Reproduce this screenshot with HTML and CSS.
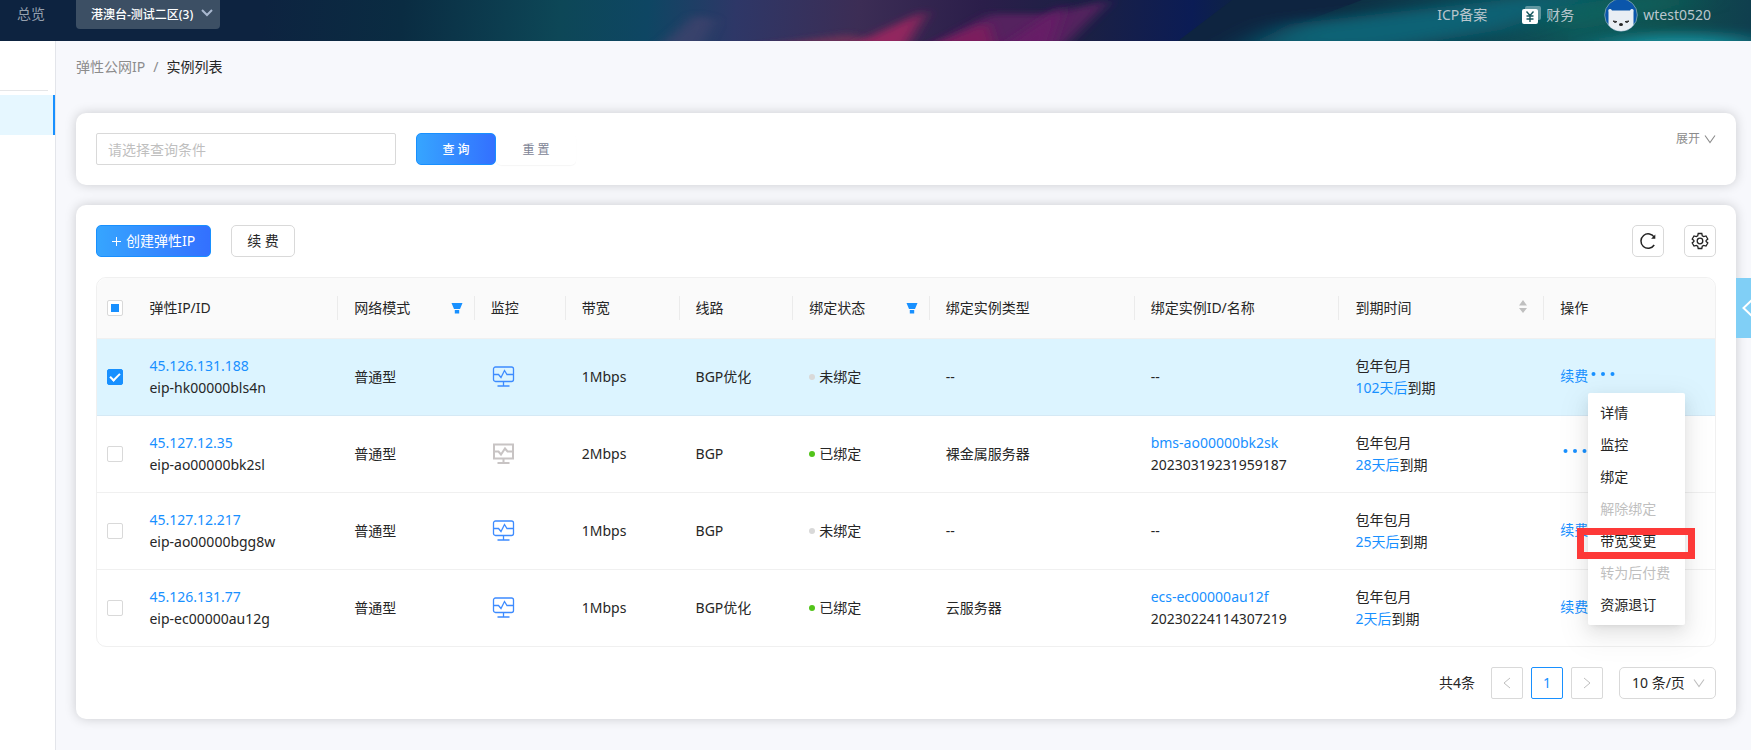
FILE: index.html
```html
<!DOCTYPE html>
<html lang="zh-CN">
<head>
    <meta charset="UTF-8">
    <meta name="viewport" content="width=device-width, initial-scale=1.0">
    <title>弹性公网IP - 实例列表</title>
    <link rel="stylesheet" href="styles.css">
</head>
<body>
    <!-- shared icons -->
    <svg class="icon-defs" aria-hidden="true">
        <symbol id="icon-down" viewBox="0 0 12 12"><path d="M1 2.500l5 7 5-7" fill="none" stroke="currentColor" stroke-width="1.100"/></symbol>
        <symbol id="icon-filter" viewBox="0 0 12 12"><path d="M.5 1h11L9 7H3zM3.800 8h4.400v3.500H3.800z" fill="currentColor"/></symbol>
        <symbol id="icon-monitor" viewBox="0 0 24 24"><path d="M4.500 2h16a2 2 0 0 1 2 2v10.500a2 2 0 0 1-2 2h-16a2 2 0 0 1-2-2V4a2 2 0 0 1 2-2zM2.500 9.500h5l2.500 3 3.500-7 2.500 4h6.500M12.500 16.500V21M6.500 21h12" fill="none" stroke="currentColor" stroke-width="1.300"/></symbol>
        <symbol id="icon-monitor-off" viewBox="0 0 24 24"><path d="M3 2.500h19v14H3zM3 9.500h4.500l2.500 3 4-6 2.500 3H22M12.500 16.500V21M6.500 21h12" fill="none" stroke="currentColor" stroke-width="2"/></symbol>
        <symbol id="icon-more" viewBox="0 0 28 8"><circle cx="5.500" cy="4" r="2"/><circle cx="15" cy="4" r="2"/><circle cx="24.500" cy="4" r="2"/></symbol>
    </svg>

    <header class="topbar">
        <!-- aurora streaks -->
        <svg class="aurora" viewBox="0 0 1751 41" preserveAspectRatio="none" aria-hidden="true">
            <defs>
                <filter id="soft" x="-20%" y="-50%" width="140%" height="200%"><feGaussianBlur stdDeviation="7 3"/></filter>
                <filter id="softer" x="-20%" y="-80%" width="140%" height="260%"><feGaussianBlur stdDeviation="24 6"/></filter>
            </defs>
            <path d="M730 50l120-16 40 16z" fill="#6a3058" filter="url(#soft)"/>
            <path d="M655 50l40-35 20 5-15 30z" fill="#4a4470" opacity=".6" filter="url(#soft)"/>
            <path d="M925 50L990 14l60 0 60-14-50 50z" fill="#55205f" filter="url(#soft)"/>
            <path d="M845 48l82-38-22 38z" fill="#93275f" filter="url(#soft)"/>
            <path d="M925 48l62-26 8 26z" fill="#7c1f5d" filter="url(#soft)"/>
            <path d="M1000 48l65-44-15 44z" fill="#661c66" filter="url(#soft)"/>
            <path d="M1178 41L1232 0h130l-110 41z" fill="#0e2440"/>
            <path d="M1240 50L1290 24 1540-4 1600-4 1500 30 1380 50z" fill="#0f6275" filter="url(#softer)"/>
            <path d="M1550 8L1650-6 1700 0 1560 36z" fill="#0f6660" opacity=".7" filter="url(#softer)"/>
            <ellipse cx="1680" cy="44" rx="80" ry="10" fill="#128a98" filter="url(#softer)"/>
        </svg>
        <nav class="topbar-left">
            <a href="#">总览</a>
            <div class="region">
                <select aria-label="区域">
                    <option>港澳台-测试二区(3)</option>
                </select>
                <svg width="12" height="12" viewBox="0 0 12 12"><path d="M1 1l5 5 5-5" fill="none" stroke="#a9b8cf" stroke-width="2"/></svg>
            </div>
        </nav>
        <nav class="topbar-right">
            <a href="#">ICP备案</a>
            <a href="#" class="finance">
                <svg width="19" height="18" viewBox="0 0 19 18">
                    <rect x="3" y="0" width="16" height="14" rx="2" fill="#fff" opacity=".35"/>
                    <rect x="0" y="3" width="16" height="15" rx="2" fill="#fff"/>
                    <path d="M4.500 5.500L8 9.500l3.500-4M8 9.500V16M4.500 10h7M4.500 13h7" fill="none" stroke="#17585f" stroke-width="1.400"/>
                </svg>
                财务
            </a>
            <a href="#" class="user">
                <svg width="34" height="34" viewBox="0 0 34 34">
                    <circle cx="17" cy="17" r="16.300" fill="#0b56ab" stroke="#6f9aa6"/>
                    <path d="M4.500 14c-1-3 2-4 3.500-1.500h18c1.500-2.500 4.500-1.500 3.500 1.500v13C26.500 31 22 33 17 33S7.500 31 4.500 27z" fill="#e9eef4"/>
                    <path d="M9 23l4 .6-2 1zM25 23l-4 .6 2 1z" fill="#333" stroke="#333"/>
                    <ellipse cx="17" cy="26.500" rx="2" ry="1.500" fill="#222"/>
                </svg>
                wtest0520
            </a>
        </nav>
    </header>

    <div class="layout">
        <aside class="sidebar">
            <hr>
            <a href="#" class="side-item active" aria-label="实例列表"></a>
        </aside>

        <main>
            <nav class="breadcrumb">
                <a href="#">弹性公网IP</a>
                <span class="sep">/</span>
                <span class="current">实例列表</span>
            </nav>

            <section class="card search">
                <input type="text" placeholder="请选择查询条件" aria-label="查询条件">
                <button class="btn-primary btn-query">查 询</button>
                <button class="btn-reset">重 置</button>
                <a href="#" class="expand">展开 <svg width="12" height="12"><use href="#icon-down"/></svg></a>
            </section>

            <section class="card">
                <div class="toolbar">
                    <button class="btn-primary btn-create">
                        <svg width="9" height="9" viewBox="0 0 9 9"><path d="M4.500 0v9M0 4.500h9" stroke="#fff"/></svg>
                        创建弹性IP
                    </button>
                    <button class="btn-default">续 费</button>
                    <button class="btn-icon first" aria-label="刷新">
                        <svg width="18" height="18" viewBox="0 0 18 18"><path d="M15.200 13a7.200 7.200 0 1 1 .2-7.500" fill="none" stroke="#222" stroke-width="1.500"/><path d="M16.300 2.500v4.300h-4.200z" fill="#222"/></svg>
                    </button>
                    <button class="btn-icon" aria-label="设置">
                        <svg width="18" height="18" viewBox="0 0 18 18" fill="none" stroke="#222" stroke-width="1.300"><path d="M7.200 1.500h3.600l.5 2.300 1.400.8 2.300-.7 1.800 3.100-1.700 1.500v1l1.700 1.500-1.800 3.100-2.300-.7-1.400.8-.5 2.300H7.200l-.5-2.300-1.400-.8-2.300.7L1.200 11l1.700-1.500v-1L1.200 7 3 3.900l2.300.7 1.400-.8z"/><circle cx="9" cy="9" r="2.800"/></svg>
                    </button>
                </div>

                <div class="table-wrap">
                    <table>
                        <colgroup>
                            <col class="w-check"><col class="w-l"><col class="w-m"><col class="w-xs"><col class="w-s">
                            <col class="w-s"><col class="w-m"><col class="w-l"><col class="w-l"><col class="w-l"><col class="w-action">
                        </colgroup>
                        <thead>
                            <tr>
                                <th class="check"><input type="checkbox" class="partial" aria-label="全选"></th>
                                <th>弹性IP/ID</th>
                                <th><div class="th-inner">网络模式 <svg class="filter" width="12" height="12"><use href="#icon-filter"/></svg></div></th>
                                <th>监控</th>
                                <th>带宽</th>
                                <th>线路</th>
                                <th><div class="th-inner">绑定状态 <svg class="filter" width="12" height="12"><use href="#icon-filter"/></svg></div></th>
                                <th>绑定实例类型</th>
                                <th>绑定实例ID/名称</th>
                                <th><div class="th-inner">到期时间 <svg class="sorter" width="8" height="18" viewBox="0 0 8 18"><path d="M4 1l4 5.500H0zM4 14l4-5H0z" fill="#bfbfbf"/></svg></div></th>
                                <th>操作</th>
                            </tr>
                        </thead>
                        <tbody>
                            <tr class="selected">
                                <td class="check"><input type="checkbox" checked aria-label="选择 eip-hk00000bls4n"></td>
                                <td><a href="#">45.126.131.188</a><br>eip-hk00000bls4n</td>
                                <td>普通型</td>
                                <td><svg class="monitor" width="24" height="24"><use href="#icon-monitor"/></svg></td>
                                <td>1Mbps</td>
                                <td>BGP优化</td>
                                <td><span class="dot"></span>未绑定</td>
                                <td>--</td>
                                <td>--</td>
                                <td>包年包月<br><a href="#">102天后</a>到期</td>
                                <td>
                                    <div class="actions">
                                        <a href="#">续费</a>
                                        <div class="more">
                                            <button class="more-btn" aria-label="更多"><svg width="28" height="8"><use href="#icon-more"/></svg></button>
                                            <ul class="menu">
                                                <li><button>详情</button></li>
                                                <li><button>监控</button></li>
                                                <li><button>绑定</button></li>
                                                <li><button disabled>解除绑定</button></li>
                                                <li class="marked"><button>带宽变更</button></li>
                                                <li><button disabled>转为后付费</button></li>
                                                <li><button>资源退订</button></li>
                                            </ul>
                                        </div>
                                    </div>
                                </td>
                            </tr>
                            <tr>
                                <td class="check"><input type="checkbox" aria-label="选择 eip-ao00000bk2sl"></td>
                                <td><a href="#">45.127.12.35</a><br>eip-ao00000bk2sl</td>
                                <td>普通型</td>
                                <td><svg class="monitor off" width="24" height="24"><use href="#icon-monitor-off"/></svg></td>
                                <td>2Mbps</td>
                                <td>BGP</td>
                                <td><span class="dot on"></span>已绑定</td>
                                <td>裸金属服务器</td>
                                <td><a href="#">bms-ao00000bk2sk</a><br>20230319231959187</td>
                                <td>包年包月<br><a href="#">28天后</a>到期</td>
                                <td>
                                    <div class="actions">
                                        <button class="more-btn" aria-label="更多"><svg width="28" height="8"><use href="#icon-more"/></svg></button>
                                    </div>
                                </td>
                            </tr>
                            <tr>
                                <td class="check"><input type="checkbox" aria-label="选择 eip-ao00000bgg8w"></td>
                                <td><a href="#">45.127.12.217</a><br>eip-ao00000bgg8w</td>
                                <td>普通型</td>
                                <td><svg class="monitor" width="24" height="24"><use href="#icon-monitor"/></svg></td>
                                <td>1Mbps</td>
                                <td>BGP</td>
                                <td><span class="dot"></span>未绑定</td>
                                <td>--</td>
                                <td>--</td>
                                <td>包年包月<br><a href="#">25天后</a>到期</td>
                                <td><div class="actions"><a href="#">续费</a></div></td>
                            </tr>
                            <tr>
                                <td class="check"><input type="checkbox" aria-label="选择 eip-ec00000au12g"></td>
                                <td><a href="#">45.126.131.77</a><br>eip-ec00000au12g</td>
                                <td>普通型</td>
                                <td><svg class="monitor" width="24" height="24"><use href="#icon-monitor"/></svg></td>
                                <td>1Mbps</td>
                                <td>BGP优化</td>
                                <td><span class="dot on"></span>已绑定</td>
                                <td>云服务器</td>
                                <td><a href="#">ecs-ec00000au12f</a><br>20230224114307219</td>
                                <td>包年包月<br><a href="#">2天后</a>到期</td>
                                <td><div class="actions"><a href="#">续费</a></div></td>
                            </tr>
                        </tbody>
                    </table>
                </div>

                <div class="pagination">
                    <span class="total">共4条</span>
                    <button disabled aria-label="上一页"><svg width="8" height="12" viewBox="0 0 8 12"><path d="M7 1L1 6l6 5" fill="none" stroke="currentColor"/></svg></button>
                    <button class="active">1</button>
                    <button disabled aria-label="下一页"><svg width="8" height="12" viewBox="0 0 8 12"><path d="M1 1l6 5-6 5" fill="none" stroke="currentColor"/></svg></button>
                    <div class="page-size">
                        <select aria-label="每页条数">
                            <option>10 条/页</option>
                        </select>
                        <svg width="12" height="12"><use href="#icon-down"/></svg>
                    </div>
                </div>
            </section>
        </main>
    </div>

    <button class="side-tab" aria-label="展开侧栏">
        <svg width="9" height="18" viewBox="0 0 9 18"><path d="M10 1L1.500 9l8.500 8" fill="none" stroke="#fff" stroke-width="2"/></svg>
    </button>
</body>
</html>
```
FILE: styles.css
```css
*, *::before, *::after { margin: 0; padding: 0; box-sizing: border-box; }
body {
    font-family: "Noto Sans", "Noto Sans CJK SC", sans-serif;
    font-size: 14px;
    line-height: 22px;
    color: #262626;
    background: #f7f8fc;
    min-height: 100vh;
    display: flex;
    flex-direction: column;
}
a { color: #1890ff; text-decoration: none; }
button, input, select { font: inherit; color: inherit; }
button { cursor: pointer; }
button:disabled { cursor: not-allowed; }
svg { display: block; flex: none; }
.icon-defs { position: absolute; width: 0; height: 0; }

/* top bar */
.topbar {
    position: relative;
    height: 41px;
    display: flex;
    justify-content: space-between;
    align-items: flex-start;
    padding: 0 40px 0 17px;
    overflow: hidden;
    background: linear-gradient(95deg, #0d2340 0%, #0d2340 15%, #0a2c42 23%, #0d4757 32%, #0e4663 37%, #2e3767 42%, #3c2d55 49%, #2b1e4a 56%, #1b2044 62%, #0b1c55 68%, #0f2440 71%, #0d3044 77%, #0d4452 84%, #0f5558 90%, #10504f 95%, #0f3e4e 100%);
}
.aurora { position: absolute; inset: 0; width: 100%; height: 100%; }
.topbar-left, .topbar-right { display: flex; position: relative; }
.topbar-left { gap: 31px; }
.topbar-right { gap: 35px; height: 30px; align-items: center; }
.topbar a { color: #b9c6cd; }
.topbar-left > a { line-height: 28px; color: #95a0ae; }
.finance, .user { display: flex; align-items: center; gap: 5px; }
.user { margin-left: -5px; }
.region {
    display: flex;
    align-items: center;
    width: 144px;
    height: 29px;
    padding: 0 7px 0 15px;
    background: #3c4f64;
    border-radius: 0 0 4px 4px;
}
.region select {
    flex: 1;
    min-width: 0;
    font-size: 12px;
    font-weight: 500;
    color: #fff;
    background: transparent;
    border: none;
    appearance: none;
}

/* page layout */
.layout { flex: 1; display: flex; }
.sidebar {
    width: 56px;
    flex: none;
    padding-top: 49px;
    background: #fff;
    border-right: 1px solid #e3e5ea;
}
.sidebar hr { width: 48px; border: none; border-top: 1px solid #e5e6e8; margin-bottom: 4px; }
.side-item { display: block; height: 40px; }
.side-item.active { background: #e6f7ff; border-right: 2px solid #1890ff; }
main { flex: 1; min-width: 0; padding: 15px 15px 12px 20px; }
.breadcrumb { display: flex; gap: 8px; margin-bottom: 35px; }
.breadcrumb a, .breadcrumb .sep { color: #8c8c8c; }

.card {
    padding: 20px;
    margin-bottom: 20px;
    background: #fff;
    border-radius: 10px;
    box-shadow: 0 0 12px rgba(0, 0, 0, 0.18);
}

/* buttons */
.btn-primary {
    height: 32px;
    color: #fff;
    border: 1px solid #1890ff;
    border-radius: 5px;
    background: linear-gradient(90deg, #36a5ff, #3370ff);
}
.btn-default, .btn-icon {
    height: 32px;
    background: #fff;
    border: 1px solid #d9d9d9;
    border-radius: 5px;
}
.btn-default { padding: 0 15px; }
.btn-icon { width: 32px; display: flex; align-items: center; justify-content: center; }
.btn-icon.first { margin-left: auto; }

/* search */
.search { display: flex; align-items: flex-start; }
.search input {
    width: 300px;
    height: 32px;
    padding: 0 11px;
    margin-right: 20px;
    border: 1px solid #d9d9d9;
    border-radius: 2px;
}
.search input::placeholder { color: #bfbfbf; }
.btn-query, .btn-reset { width: 80px; padding-top: 1px; font-size: 12px; }
.btn-query { font-weight: 500; }
.btn-reset {
    height: 32px;
    color: #808495;
    background: #fff;
    border: none;
    border-radius: 5px;
    box-shadow: 0 1px 1px rgba(0, 0, 0, 0.04);
}
.expand {
    display: flex;
    align-items: center;
    gap: 4px;
    margin-left: auto;
    font-size: 12px;
    line-height: 8px;
    color: #8c8c8c;
}

.toolbar { display: flex; gap: 20px; margin-bottom: 20px; }
.btn-create { display: flex; align-items: center; gap: 5px; padding: 0 15px; }

/* table */
.table-wrap { border: 1px solid #f0f0f0; border-radius: 10px; }
table { width: 100%; table-layout: fixed; border-collapse: separate; border-spacing: 0; }
.w-check { width: 32px; }
.w-xs { width: 80px; }
.w-s { width: 100px; }
.w-m { width: 120px; }
.w-l { width: 180px; }
.w-action { width: 150px; }
th, td { padding: 16px; text-align: left; border-bottom: 1px solid #f0f0f0; }
th {
    height: 61px;
    padding: 0 16px;
    font-weight: 400;
    background: linear-gradient(#ebebeb, #ebebeb) right center / 1px 24px no-repeat #fafafa;
}
th.check, th:last-child { background: #fafafa; }
th:first-child { border-top-left-radius: 10px; }
th:last-child { border-top-right-radius: 10px; }
td { height: 77px; }
tbody tr:last-child td { height: 76px; border-bottom: none; }
.selected td { background: #dcf4ff; border-bottom-color: #d5e9f5; }
th.check, td.check { padding: 0; text-align: center; }
.th-inner { display: flex; align-items: center; justify-content: space-between; }
.filter { color: #1890ff; margin-right: -4px; }
.sorter { margin-right: 1px; }
.monitor { color: #3d8bff; }
.monitor.off { color: #c8c4c4; }

input[type="checkbox"] {
    display: block;
    width: 16px;
    height: 16px;
    margin: 0 auto;
    appearance: none;
    background: #fff;
    border: 1px solid #d9d9d9;
    border-radius: 2px;
}
input[type="checkbox"].partial {
    background: linear-gradient(#1890ff, #1890ff) center / 8px 8px no-repeat #fff;
}
input[type="checkbox"]:checked {
    display: flex;
    align-items: center;
    justify-content: center;
    background: #1890ff;
    border-color: #1890ff;
}
input[type="checkbox"]:checked::after {
    content: "";
    width: 6px;
    height: 10px;
    margin-bottom: 2px;
    border: solid #fff;
    border-width: 0 2px 2px 0;
    transform: rotate(45deg);
}

.dot {
    display: inline-block;
    width: 6px;
    height: 6px;
    margin-right: 4px;
    vertical-align: 2px;
    border-radius: 50%;
    background: #d9d9d9;
}
.dot.on { background: #52c41a; }

/* row actions */
.actions { display: flex; align-items: flex-start; height: 24px; }
.more { position: relative; }
.more-btn { display: block; padding: 5px 0; border: none; background: none; }
.more-btn svg { fill: #1890ff; }
.menu {
    position: absolute;
    top: 28px;
    left: 0;
    z-index: 10;
    width: 97px;
    padding: 4px 0;
    list-style: none;
    background: #fff;
    border-radius: 2px;
    box-shadow: 0 3px 6px -4px rgba(0, 0, 0, 0.12), 0 6px 16px rgba(0, 0, 0, 0.08), 0 9px 28px 8px rgba(0, 0, 0, 0.05);
}
.menu li { position: relative; }
.menu button {
    display: block;
    width: 100%;
    height: 32px;
    padding: 0 12px;
    text-align: left;
    border: none;
    background: none;
}
.menu button:disabled { color: #bfbfbf; }
.marked::after {
    content: "";
    position: absolute;
    top: 3px;
    left: -11px;
    right: -10px;
    height: 31px;
    border: 7px solid #fd3938;
    pointer-events: none;
}

/* pagination */
.pagination { display: flex; align-items: center; gap: 8px; justify-content: flex-end; margin-top: 20px; }
.total { margin-right: 8px; }
.pagination button {
    width: 32px;
    height: 32px;
    display: flex;
    align-items: center;
    justify-content: center;
    background: #fff;
    border: 1px solid #d9d9d9;
    border-radius: 2px;
}
.pagination button:disabled { color: #bfbfbf; }
.pagination button.active { color: #1890ff; border-color: #1890ff; }
.page-size {
    display: flex;
    align-items: center;
    width: 97px;
    height: 32px;
    margin-left: 8px;
    padding: 0 10px 0 12px;
    border: 1px solid #d9d9d9;
    border-radius: 5px;
    color: #bfbfbf;
}
.page-size select {
    flex: 1;
    min-width: 0;
    color: #262626;
    border: none;
    background: transparent;
    appearance: none;
}

.side-tab {
    position: absolute;
    top: 278px;
    right: 0;
    width: 15px;
    height: 60px;
    display: flex;
    align-items: center;
    justify-content: flex-end;
    border: none;
    background: #80cff6;
}
```
